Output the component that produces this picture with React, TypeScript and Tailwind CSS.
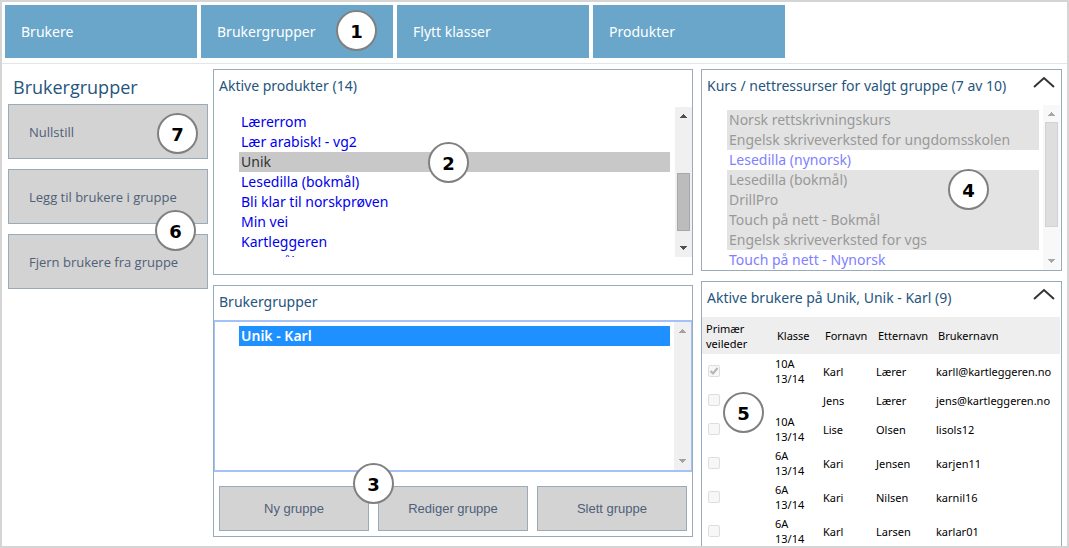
import type { ReactNode } from 'react';

const tabs = ['Brukere', 'Brukergrupper', 'Flytt klasser', 'Produkter'];

const products = [
  'Lærerrom',
  'Lær arabisk! - vg2',
  'Unik',
  'Lesedilla (bokmål)',
  'Bli klar til norskprøven',
  'Min vei',
  'Kartleggeren',
  'Nye mål',
];

const courses = [
  { name: 'Norsk rettskrivningskurs', active: false },
  { name: 'Engelsk skriveverksted for ungdomsskolen', active: false },
  { name: 'Lesedilla (nynorsk)', active: true },
  { name: 'Lesedilla (bokmål)', active: false },
  { name: 'DrillPro', active: false },
  { name: 'Touch på nett - Bokmål', active: false },
  { name: 'Engelsk skriveverksted for vgs', active: false },
  { name: 'Touch på nett - Nynorsk', active: true },
];

const users = [
  { klasse: '10A 13/14', first: 'Karl', last: 'Lærer', username: 'karll@kartleggeren.no', primary: true },
  { klasse: '', first: 'Jens', last: 'Lærer', username: 'jens@kartleggeren.no', primary: false },
  { klasse: '10A 13/14', first: 'Lise', last: 'Olsen', username: 'lisols12', primary: false },
  { klasse: '6A 13/14', first: 'Kari', last: 'Jensen', username: 'karjen11', primary: false },
  { klasse: '6A 13/14', first: 'Kari', last: 'Nilsen', username: 'karnil16', primary: false },
  { klasse: '6A 13/14', first: 'Karl', last: 'Larsen', username: 'karlar01', primary: false },
];

const Badge = ({ className, children }: { className: string; children: ReactNode }) => (
  <span
    className={`absolute z-10 flex h-[41px] w-[41px] items-center justify-center rounded-full border-2 border-[#808080] bg-white pt-[2px] font-['DejaVu_Sans'] text-lg font-bold text-black ${className}`}
  >
    {children}
  </span>
);

const Arrow = ({ down = false, color }: { down?: boolean; color: string }) => (
  <svg width="7" height="4" viewBox="0 0 7 4" className={down ? 'rotate-180' : ''} aria-hidden="true">
    <path d="M3 0h1v1h1v1h1v1h1v1H0V3h1V2h1V1h1z" fill={color} shapeRendering="crispEdges" />
  </svg>
);

const Scrollbar = ({ className, color, children }: { className: string; color: string; children?: ReactNode }) => (
  <div className={`flex w-[17px] shrink-0 flex-col items-center py-[7px] ${className}`}>
    <Arrow color={color} />
    <div className="flex w-full flex-1 flex-col px-[2px]">{children}</div>
    <Arrow down color={color} />
  </div>
);

const Chevron = () => (
  <svg width="22" height="12" viewBox="0 0 22 12" fill="none" stroke="#333" strokeWidth="2" aria-hidden="true">
    <path d="M1 11 11 2l10 9" />
  </svg>
);

const Panel = ({ className = '', children }: { className?: string; children: ReactNode }) => (
  <section className={`relative flex flex-col border border-[#98abbb] bg-white ${className}`}>{children}</section>
);

const buttonClass = 'border border-[#98abbb] bg-[#d3d3d3] text-[13px] text-[#4f6078]';
const sideButtonClass = `h-[55px] px-5 pt-[2px] text-left font-['Open_Sans',sans-serif] ${buttonClass}`;
const groupButtonClass = `h-[45px] flex-1 font-['Liberation_Sans',sans-serif] ${buttonClass}`;
const titleClass = 'text-sm leading-5 text-[#25557d]';

export default function App() {
  return (
    <div className="flex h-screen flex-col overflow-hidden border-2 border-[#d5d5d5] bg-white font-['Noto_Sans',sans-serif]">
      <nav className="flex shrink-0 gap-1 border-b border-[#e5e5e5] px-[3px] pt-[3px] pb-[5px]">
        {tabs.map(tab => (
          <a key={tab} href="#" className="relative flex h-[53px] w-48 items-center bg-[#69a6ca] px-4 text-sm text-white">
            {tab}
            {tab === 'Brukergrupper' && <Badge className="top-[5px] right-4">1</Badge>}
          </a>
        ))}
      </nav>

      <main className="flex min-h-0 flex-1 pt-[5px] pr-[5px] pl-[6px]">
        <aside className="mr-[5px] w-[200px] shrink-0">
          <h1 className="px-[5px] pt-1 pb-[3px] font-['Open_Sans',sans-serif] text-lg leading-7 text-[#25557d]">
            Brukergrupper
          </h1>
          <div className="relative flex flex-col gap-[10px]">
            <button type="button" className={sideButtonClass}>Nullstill</button>
            <button type="button" className={sideButtonClass}>Legg til brukere i gruppe</button>
            <button type="button" className={sideButtonClass}>Fjern brukere fra gruppe</button>
            <Badge className="top-[9px] right-[10px]">7</Badge>
            <Badge className="top-[106px] right-3">6</Badge>
          </div>
        </aside>

        <div className="mr-2 flex min-w-0 flex-1 flex-col gap-[10px]">
          <Panel className="pb-[17px]">
            <h2 className={`px-[5px] pt-[6px] pb-[11px] ${titleClass}`}>Aktive produkter (14)</h2>
            <div className="flex h-[150px]">
              <ul className="mr-[5px] flex-1 overflow-hidden pt-[5px] pl-[25px] text-sm leading-5 text-[#0000ee]">
                {products.map(name => (
                  <li key={name} className={name === 'Unik' ? 'bg-[#c8c8c8] px-[2px] text-[#333]' : 'px-[2px]'}>
                    <a href="#" className="block">{name}</a>
                  </li>
                ))}
              </ul>
              <Scrollbar className="bg-[#f0f0f0]" color="#505050">
                <div className="mt-[55px] h-[58px] border border-[#a8a8a8] bg-[#bcbcbc]" />
              </Scrollbar>
            </div>
            <Badge className="top-[72px] left-[214px]">2</Badge>
          </Panel>

          <Panel>
            <h2 className={`px-[5px] pt-[6px] pb-2 ${titleClass}`}>Brukergrupper</h2>
            <div className="flex h-[152px] border-2 border-x border-[#a3c2fa]">
              <ul className="mr-1 flex-1 pt-1 pl-6 text-sm leading-5 font-semibold text-white">
                <li className="bg-[#1e90ff] px-[2px]">
                  <a href="#" className="block">Unik - Karl</a>
                </li>
              </ul>
              <Scrollbar className="bg-[#f0f0f0]" color="#a3a3a3" />
            </div>
            <div className="flex gap-[9px] px-[5px] pt-[14px] pb-[5px]">
              <button type="button" className={groupButtonClass}>Ny gruppe</button>
              <button type="button" className={groupButtonClass}>Rediger gruppe</button>
              <button type="button" className={groupButtonClass}>Slett gruppe</button>
            </div>
            <Badge className="top-[177px] left-[139px]">3</Badge>
          </Panel>
        </div>

        <div className="flex w-[361px] shrink-0 flex-col gap-[10px]">
          <Panel>
            <div className="flex items-start justify-between pt-[6px] pr-[6px] pb-[9px] pl-[5px]">
              <h2 className={titleClass}>Kurs / nettressurser for valgt gruppe (7 av 10)</h2>
              <button type="button" aria-label="Skjul kurs"><Chevron /></button>
            </div>
            <div className="flex h-[165px] pr-px">
              <ul className="mr-1 flex-1 overflow-hidden pt-[5px] pl-[25px] text-sm leading-5">
                {courses.map(course => (
                  <li
                    key={course.name}
                    className={course.active ? 'px-[2px] text-[#8080ff]' : 'bg-[#e3e3e3] px-[2px] text-[#999]'}
                  >
                    {course.name}
                  </li>
                ))}
              </ul>
              <Scrollbar className="bg-[#f8f8f8]" color="#a8a8a8">
                <div className="mt-[6px] h-[105px] border border-[#d3d3d3] bg-[#dedede]" />
              </Scrollbar>
            </div>
            <Badge className="top-[99px] right-[72px]">4</Badge>
          </Panel>

          <Panel className="min-h-0 flex-1 overflow-hidden border-b-0">
            <div className="flex items-start justify-between pt-[6px] pr-[6px] pb-[9px] pl-[5px]">
              <h2 className={titleClass}>Aktive brukere på Unik, Unik - Karl (9)</h2>
              <button type="button" aria-label="Skjul brukere"><Chevron /></button>
            </div>
            <table className="mr-px table-fixed text-left text-[11px] leading-[15px] text-black">
              <thead className="bg-[#eee]">
                <tr className="h-[37px]">
                  <th className="w-[71px] pl-1 font-normal">Primær<br />veileder</th>
                  <th className="w-12 pl-1 font-normal">Klasse</th>
                  <th className="w-[53px] pl-1 font-normal">Fornavn</th>
                  <th className="w-[60px] pl-1 font-normal">Etternavn</th>
                  <th className="pl-1 font-normal">Brukernavn</th>
                </tr>
              </thead>
              <tbody>
                {users.map(user => (
                  <tr key={user.username} className={user.klasse ? 'h-[34px]' : 'h-6'}>
                    <td className="pl-[6px]">
                      <div className="relative h-3 w-3">
                        <input
                          type="checkbox"
                          disabled
                          defaultChecked={user.primary}
                          aria-label={`Primær veileder ${user.first} ${user.last}`}
                          className="block h-3 w-3 appearance-none rounded-[2px] border border-[#dedede] bg-[#f7f7f7]"
                        />
                        {user.primary && (
                          <svg viewBox="0 0 12 12" className="absolute inset-0" fill="none" stroke="#b5b5b5" strokeWidth="2" aria-hidden="true">
                            <path d="M2.5 6 5 8.5 9.5 3" />
                          </svg>
                        )}
                      </div>
                    </td>
                    <td className="pr-4 pl-[2px]">{user.klasse}</td>
                    <td className="pl-[2px]">{user.first}</td>
                    <td className="pl-[2px]">{user.last}</td>
                    <td className="pl-[2px]">{user.username}</td>
                  </tr>
                ))}
              </tbody>
            </table>
            <Badge className="top-[110px] left-[21px]">5</Badge>
          </Panel>
        </div>
      </main>
    </div>
  );
}
